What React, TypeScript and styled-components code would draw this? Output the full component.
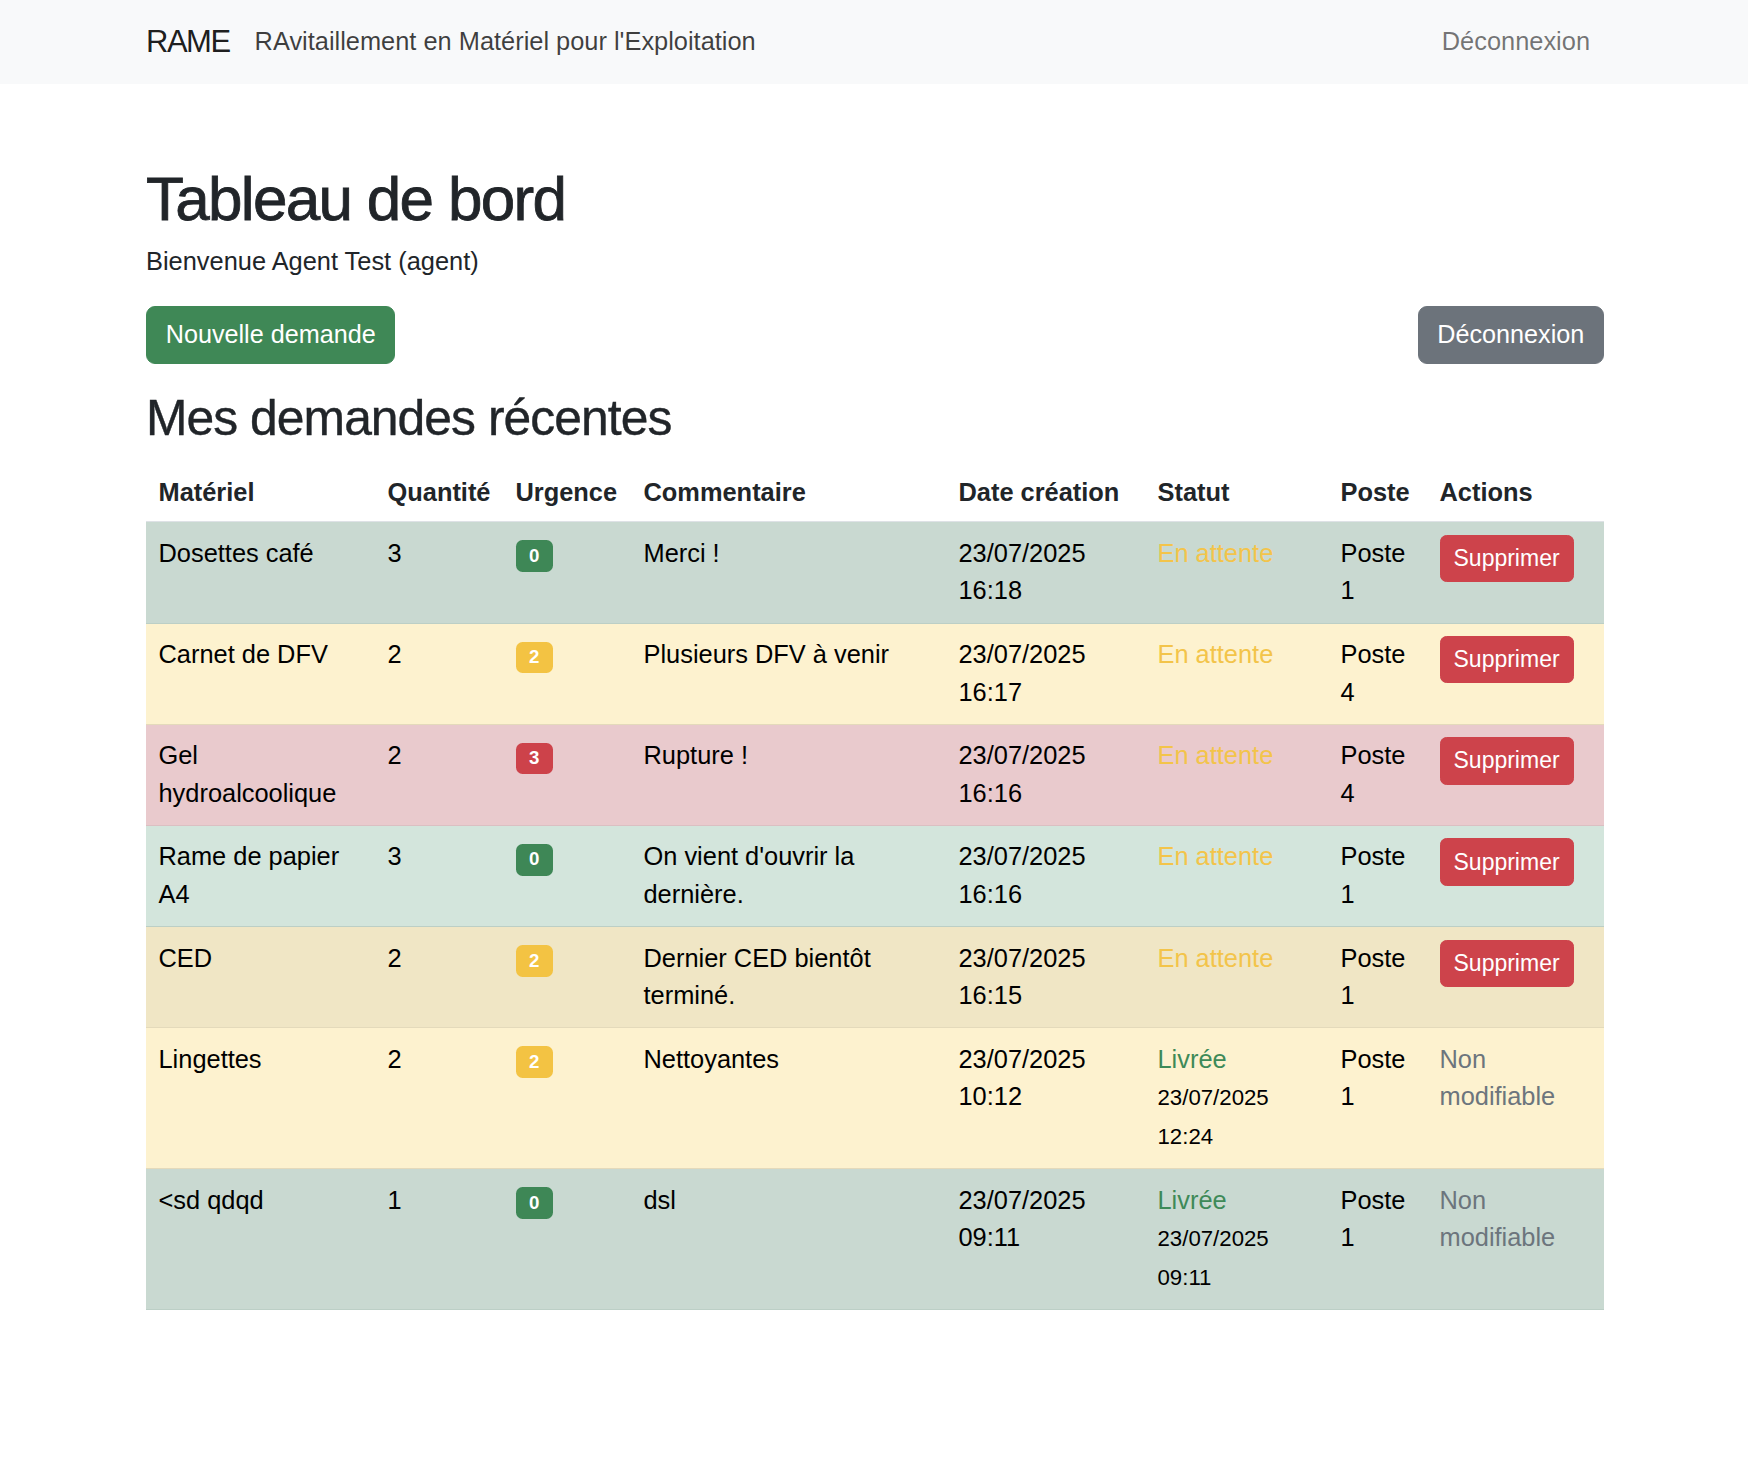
import React from "react";
import styled, { createGlobalStyle, css } from "styled-components";

const GlobalStyle = createGlobalStyle`
  * { box-sizing: border-box; }
  body {
    margin: 0;
    font-family: "Liberation Sans", Arial, Helvetica, sans-serif;
    font-size: 25.4px;
    line-height: 37.6px;
    color: #212529;
    background: #ffffff;
  }
`;

const Navbar = styled.nav`
  background: #f8f9fa;
  height: 84px;
  display: flex;
  align-items: center;
`;

const NavInner = styled.div`
  width: 1458px;
  margin: 0 auto;
  padding-left: 1px;
  display: flex;
  align-items: center;
`;

const Brand = styled.span`
  font-size: 31px;
  letter-spacing: -1.5px;
  color: rgba(0, 0, 0, 0.9);
  margin-right: 25px;
`;

const NavText = styled.span`
  color: rgba(0, 0, 0, 0.75);
`;

const NavLink = styled.a`
  margin-left: auto;
  padding-right: 13px;
  color: rgba(0, 0, 0, 0.55);
  text-decoration: none;
`;

const Main = styled.main`
  width: 1458px;
  margin: 78px auto 0;
  position: relative;
  left: 1px;
`;

const Title = styled.h1`
  margin: 0 0 7px;
  font-size: 62px;
  font-weight: 500;
  line-height: 1.2;
  letter-spacing: -1.7px;
  -webkit-text-stroke: 0.8px #212529;
`;

const Welcome = styled.p`
  margin: 0 0 25px;
`;

const ButtonRow = styled.div`
  display: flex;
  justify-content: space-between;
  align-items: center;
  margin-bottom: 25px;
`;

const Button = styled.button<{ $tone: "success" | "secondary" }>`
  font-family: inherit;
  font-size: 25.2px;
  line-height: 37.4px;
  padding: 9.3px 18.7px;
  border-radius: 9px;
  color: #fff;
  cursor: pointer;
  ${({ $tone }) =>
    $tone === "success"
      ? css`
          background: #3f8856;
          border: 1px solid #3f8856;
        `
      : css`
          background: #6c737b;
          border: 1px solid #6c737b;
        `}
`;

const Subtitle = styled.h2`
  margin: 0 0 12.5px;
  font-size: 49.8px;
  font-weight: 500;
  line-height: 1.2;
  letter-spacing: -0.95px;
  -webkit-text-stroke: 0.4px #212529;
`;

const Table = styled.table`
  width: 1458px;
  table-layout: fixed;
  border-collapse: collapse;
  color: #000;
`;

const Th = styled.th`
  text-align: left;
  vertical-align: bottom;
  padding: 12.5px 12.5px 10px;
  font-weight: 700;
  color: #212529;
  border-bottom: 1px solid #dee2e6;
`;

type Variant = "success" | "warning" | "danger";

const rowColors: Record<Variant, { even: string; odd: string; border: string }> = {
  success: { even: "#d3e5dc", odd: "#c9d9d1", border: "#bccfc6" },
  warning: { even: "#fdf2cf", odd: "#f0e6c5", border: "#e4dabb" },
  danger: { even: "#f4d5d8", odd: "#e9cacd", border: "#dbbfc2" },
};

const Tr = styled.tr<{ $variant: Variant; $odd: boolean }>`
  background: ${({ $variant, $odd }) =>
    $odd ? rowColors[$variant].odd : rowColors[$variant].even};
  border-bottom: 1px solid ${({ $variant }) => rowColors[$variant].border};
`;

const Td = styled.td`
  vertical-align: top;
  padding: 12.5px;
`;

const badgeColors: Record<Variant, string> = {
  success: "#3e8756",
  warning: "#f3c343",
  danger: "#cd424a",
};

const Badge = styled.span<{ $variant: Variant }>`
  display: inline-block;
  padding: 6.5px 13.5px;
  font-size: 18.7px;
  font-weight: 700;
  line-height: 1;
  color: #fff;
  border-radius: 6.5px;
  background: ${({ $variant }) => badgeColors[$variant]};
`;

const Status = styled.span<{ $tone: "pending" | "delivered" }>`
  color: ${({ $tone }) => ($tone === "pending" ? "#f3c44a" : "#3e8a58")};
`;

const Small = styled.small`
  font-size: 0.875em;
`;

const DeleteButton = styled.button`
  font-family: inherit;
  font-size: 23px;
  line-height: 33px;
  padding: 6.2px 13px;
  border-radius: 6.5px;
  background: #cd434b;
  border: 1px solid #cd434b;
  color: #fff;
  cursor: pointer;
`;

const Muted = styled.span`
  color: #6c757d;
`;

type Row = {
  material: string;
  qty: number;
  urgency: number;
  comment: string;
  created: string;
  delivered?: string;
  poste: string;
};

const rows: Row[] = [
  { material: "Dosettes café", qty: 3, urgency: 0, comment: "Merci !", created: "23/07/2025 16:18", poste: "Poste 1" },
  { material: "Carnet de DFV", qty: 2, urgency: 2, comment: "Plusieurs DFV à venir", created: "23/07/2025 16:17", poste: "Poste 4" },
  { material: "Gel hydroalcoolique", qty: 2, urgency: 3, comment: "Rupture !", created: "23/07/2025 16:16", poste: "Poste 4" },
  { material: "Rame de papier A4", qty: 3, urgency: 0, comment: "On vient d'ouvrir la dernière.", created: "23/07/2025 16:16", poste: "Poste 1" },
  { material: "CED", qty: 2, urgency: 2, comment: "Dernier CED bientôt terminé.", created: "23/07/2025 16:15", poste: "Poste 1" },
  { material: "Lingettes", qty: 2, urgency: 2, comment: "Nettoyantes", created: "23/07/2025 10:12", delivered: "23/07/2025 12:24", poste: "Poste 1" },
  { material: "<sd qdqd", qty: 1, urgency: 0, comment: "dsl", created: "23/07/2025 09:11", delivered: "23/07/2025 09:11", poste: "Poste 1" },
];

const variantFor = (u: number): Variant => (u >= 3 ? "danger" : u >= 1 ? "warning" : "success");

const colWidths = [229, 128, 128, 315, 199, 183, 99, 177];
const headers = ["Matériel", "Quantité", "Urgence", "Commentaire", "Date création", "Statut", "Poste", "Actions"];

export default function App() {
  return (
    <>
      <GlobalStyle />
      <Navbar>
        <NavInner>
          <Brand>RAME</Brand>
          <NavText>RAvitaillement en Matériel pour l'Exploitation</NavText>
          <NavLink href="#">Déconnexion</NavLink>
        </NavInner>
      </Navbar>
      <Main>
        <Title>Tableau de bord</Title>
        <Welcome>Bienvenue Agent Test (agent)</Welcome>
        <ButtonRow>
          <Button $tone="success">Nouvelle demande</Button>
          <Button $tone="secondary">Déconnexion</Button>
        </ButtonRow>
        <Subtitle>Mes demandes récentes</Subtitle>
        <Table>
          <colgroup>
            {colWidths.map((w, i) => (
              <col key={i} width={w} />
            ))}
          </colgroup>
          <thead>
            <tr>
              {headers.map((h) => (
                <Th key={h}>{h}</Th>
              ))}
            </tr>
          </thead>
          <tbody>
            {rows.map((r, i) => {
              const v = variantFor(r.urgency);
              return (
                <Tr key={i} $variant={v} $odd={i % 2 === 0}>
                  <Td>{r.material}</Td>
                  <Td>{r.qty}</Td>
                  <Td>
                    <Badge $variant={v}>{r.urgency}</Badge>
                  </Td>
                  <Td>{r.comment}</Td>
                  <Td>{r.created}</Td>
                  <Td>
                    {r.delivered ? (
                      <>
                        <Status $tone="delivered">Livrée</Status>
                        <br />
                        <Small>{r.delivered}</Small>
                      </>
                    ) : (
                      <Status $tone="pending">En attente</Status>
                    )}
                  </Td>
                  <Td>{r.poste}</Td>
                  <Td>
                    {r.delivered ? (
                      <Muted>Non modifiable</Muted>
                    ) : (
                      <DeleteButton>Supprimer</DeleteButton>
                    )}
                  </Td>
                </Tr>
              );
            })}
          </tbody>
        </Table>
      </Main>
    </>
  );
}
